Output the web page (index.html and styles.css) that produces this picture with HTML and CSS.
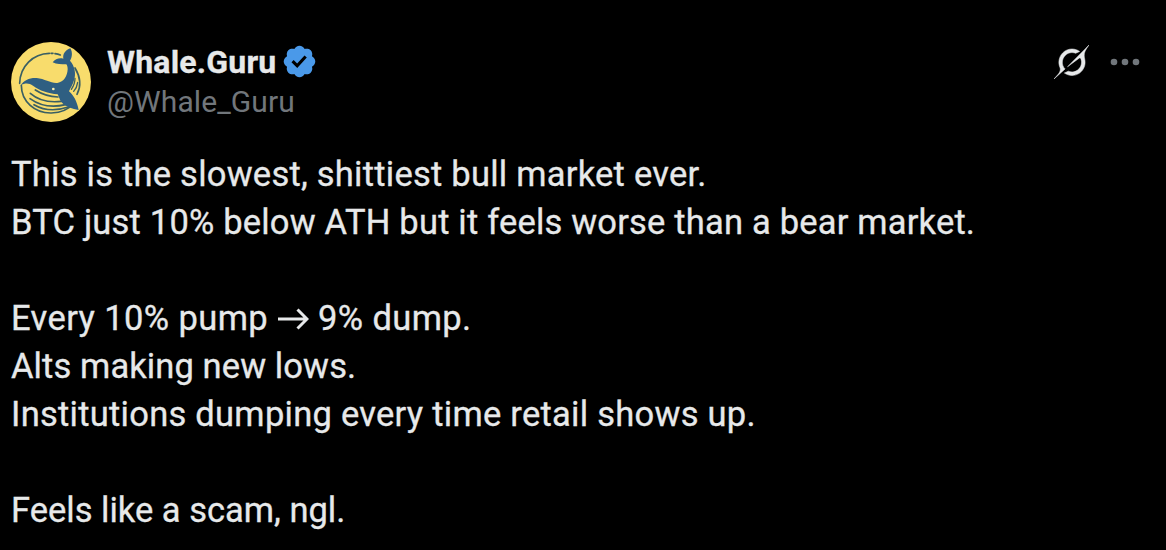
FILE: index.html
```html
<!DOCTYPE html>
<html lang="en">
<head>
    <meta charset="UTF-8">
    <meta name="viewport" content="width=device-width, initial-scale=1.0">
    <title>Whale.Guru</title>
    <link rel="stylesheet" href="styles.css">
</head>
<body>
    <article class="post">
        <header class="post-header">
            <svg class="avatar" viewBox="33 30 240 240">
                <circle cx="153" cy="150" r="120" fill="#f8dc6c"/>
                <g fill="none" stroke="#3a5f63" stroke-width="5" stroke-linecap="round">
                    <path d="M59 154C60 103 99 65 148 64"/>
                    <path d="M153 64H159M165 65Q174 66 181 69"/>
                    <path d="M64 160C64 209 105 244 154 243C185 242 207 231 222 213"/>
                    <path d="M225 108C242 136 243 164 231 187"/>
                    <path d="M106 174C126 187 146 194 174 195"/>
                    <path d="M91 184C114 204 144 213 184 208"/>
                    <path d="M90 200C119 221 155 228 197 218"/>
                    <path d="M102 218C131 235 166 238 205 225"/>
                    <path d="M225 139Q225 157 214 172M233 151Q231 167 221 178" stroke-width="4"/>
                </g>
                <path fill="#2f5f82" d="M62 160C71 145 88 137 110 138C135 140 153 155 172 153C192 150 202 132 203 112C203 105 202 101 199 97C184 97 170 97 158 91C166 81 177 77 190 80C188 66 195 55 211 49C218 61 217 75 210 86C224 101 229 125 222 145C219 158 211 169 207 178C220 190 231 206 236 234C218 231 197 225 185 211C178 203 177 194 173 187C144 184 119 176 99 161C87 153 75 153 62 160Z"/>
                <circle cx="160" cy="171" r="4" fill="#f8eeb0"/>
            </svg>
            <div class="author">
                <div class="name-row">
                    <span class="name">Whale.Guru</span>
                    <svg class="verified" viewBox="0 0 22 22">
                        <path fill="#4a99e9" d="M20.396 11c-.018-.646-.215-1.275-.57-1.816-.354-.54-.852-.972-1.438-1.246.223-.607.27-1.264.14-1.897-.131-.634-.437-1.218-.882-1.687-.47-.445-1.053-.75-1.687-.882-.633-.13-1.29-.083-1.897.14-.273-.587-.704-1.086-1.245-1.44S11.647 1.62 11 1.604c-.646.017-1.273.213-1.813.568s-.969.854-1.24 1.44c-.608-.223-1.267-.272-1.902-.14-.635.13-1.22.436-1.69.882-.445.47-.749 1.055-.878 1.688-.13.633-.08 1.29.144 1.896-.587.274-1.087.705-1.443 1.245-.356.54-.555 1.17-.574 1.817.02.647.218 1.276.574 1.817.356.54.856.972 1.443 1.245-.224.606-.274 1.263-.144 1.896.13.634.433 1.218.877 1.688.47.443 1.054.747 1.687.878.633.132 1.29.084 1.897-.136.274.586.705 1.084 1.246 1.439.54.354 1.17.551 1.816.569.647-.016 1.276-.213 1.817-.567s.972-.854 1.245-1.44c.604.239 1.266.296 1.903.164.636-.132 1.22-.447 1.68-.907.46-.46.776-1.044.908-1.681s.075-1.299-.165-1.903c.586-.274 1.084-.705 1.439-1.246.354-.54.551-1.17.569-1.816zM9.662 14.85l-3.429-3.428 1.293-1.302 2.072 2.072 4.4-4.794 1.347 1.246z"/>
                    </svg>
                </div>
                <span class="handle">@Whale_Guru</span>
            </div>
            <div class="actions">
                <svg class="grok" viewBox="0 0 33 32">
                    <path fill="#e7e9ea" stroke="#e7e9ea" stroke-width="0.5" d="M12.745 20.54l10.97-8.19c.539-.4 1.307-.244 1.564.38 1.349 3.288.746 7.241-1.938 9.955-2.683 2.714-6.417 3.31-9.83 1.954l-3.728 1.745c5.347 3.697 11.84 2.782 15.898-1.324 3.219-3.255 4.216-7.692 3.284-11.693l.008.009c-1.351-5.878.332-8.227 3.782-13.031L33 0l-4.54 4.59v-.014L12.743 20.544m-2.263 1.987c-3.837-3.707-3.175-9.446.1-12.755 2.42-2.449 6.388-3.448 9.852-1.979l3.72-1.737c-.67-.49-1.53-1.017-2.515-1.387-4.455-1.854-9.789-.931-13.41 2.728-3.483 3.523-4.579 8.94-2.697 13.561 1.405 3.454-.899 5.898-3.22 8.364C1.49 30.2.666 31.074 0 32l10.478-9.466"/>
                </svg>
                <svg class="more" viewBox="0 0 30 8">
                    <g fill="#71767b">
                        <circle cx="4" cy="4" r="3.3"/>
                        <circle cx="15" cy="4" r="3.3"/>
                        <circle cx="26" cy="4" r="3.3"/>
                    </g>
                </svg>
            </div>
        </header>
        <div class="post-text">
            <p class="slowest">This is the slowest, shittiest bull market ever.</p>
            <p class="btc">BTC just 10% below ATH but it feels worse than a bear market.</p>
            <br>
            <p class="pump">Every 10% pump <svg class="arrow" viewBox="0 0 32 22"><path d="M1 11H30M20.5 1.5L30 11L20.5 20.5" fill="none" stroke="#e7e9ea" stroke-width="3"/></svg> 9% dump.</p>
            <p class="alts">Alts making new lows.</p>
            <p class="institutions">Institutions dumping every time retail shows up.</p>
            <br>
            <p class="scam">Feels like a scam, ngl.</p>
        </div>
    </article>
</body>
</html>
```
FILE: styles.css
```css
body {
    margin: 0;
    background: #000;
    color: #e7e9ea;
    font-family: Roboto, "Liberation Sans", sans-serif;
}
.post {
    padding: 42px 26px 0 11px;
}
.post-header {
    display: flex;
    height: 80px;
}
.avatar {
    width: 80px;
    height: 80px;
    margin-right: 16px;
}
.author {
    display: flex;
    flex-direction: column;
}
.name-row {
    display: flex;
    align-items: center;
    height: 40px;
}
.name {
    font-size: 32px;
    font-weight: 700;
    letter-spacing: 0.2px;
    -webkit-text-stroke: 0.3px #e7e9ea;
}
.verified {
    width: 37px;
    height: 37px;
    margin-left: 5px;
}
.handle {
    color: #71767b;
    font-size: 30px;
    letter-spacing: 0.1px;
    line-height: 41px;
}
.actions {
    display: flex;
    align-items: center;
    height: 40px;
    margin-left: auto;
}
.grok {
    width: 35px;
    height: 34px;
    margin-right: 21px;
}
.more {
    width: 30px;
    height: 8px;
}
.post-text {
    margin-top: 28px;
    font-size: 34.5px;
    line-height: 48px;
    -webkit-text-stroke: 0.3px #e7e9ea;
}
.post-text p {
    margin: 0;
    white-space: nowrap;
}
.slowest {
    letter-spacing: 0.24px;
}
.btc {
    letter-spacing: 0.19px;
}
.pump {
    letter-spacing: 0.4px;
}
.alts {
    letter-spacing: 0.1px;
}
.institutions {
    letter-spacing: 0.26px;
}
.arrow {
    width: 32px;
    height: 22px;
}
```
